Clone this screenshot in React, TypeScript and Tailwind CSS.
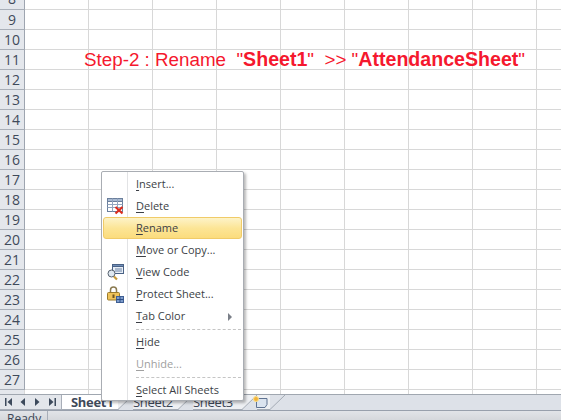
const ROWS = [9, 10, 11, 12, 13, 14, 15, 16, 17, 18, 19, 20, 21, 22, 23, 24, 25, 26, 27];
const COLS = [0, 1, 2, 3, 4, 5, 6, 7, 8];

function Cells() {
  return (
    <div className="flex flex-1 h-full">
      {COLS.map((c) => (
        <div key={c} className="w-[64px] h-full shrink-0 border-r border-[#d8d8d8] box-border" />
      ))}
    </div>
  );
}

function Row({ n }: { n: number }) {
  return (
    <div className="flex h-[20px] shrink-0 border-b border-[#d8d8d8] box-border">
      <div className="w-[25px] shrink-0 bg-[#e4e7ec] border-r border-r-[#9ea5b0] border-b border-b-[#a9afb8] -mb-px flex items-center justify-center text-[14px] text-[#3f4a5a]">
        {n}
      </div>
      <Cells />
    </div>
  );
}

function DeleteIcon() {
  return (
    <svg width="17" height="17" viewBox="0 0 17 17">
      <rect x="0.500" y="0.500" width="15" height="13" fill="#fff" stroke="#6b7f9c" />
      <rect x="0.500" y="0.500" width="15" height="3" fill="#a9bad2" stroke="#6b7f9c" />
      <path d="M0.500 6.500h15M0.500 9.500h15M5.500 0.500v13M10.500 0.500v13" stroke="#93a6c0" />
      <path d="M8.500 9l7 6.500M15.500 9l-7 6.500" stroke="#dc2d1e" strokeWidth="2.200" />
    </svg>
  );
}

function ViewCodeIcon() {
  return (
    <svg width="17" height="17" viewBox="0 0 17 17">
      <rect x="5.500" y="0.500" width="11" height="9" fill="#e8eef6" stroke="#4a6285" />
      <rect x="5.500" y="0.500" width="11" height="2" fill="#6f8db8" stroke="#4a6285" />
      <path d="M8 5h7M8 7h7" stroke="#6d84a6" />
      <circle cx="4.500" cy="9.500" r="3.500" fill="#dfe8f0" stroke="#56616e" />
      <path d="M7 12.500l3 3" stroke="#c79a3a" strokeWidth="2.200" />
    </svg>
  );
}

function ProtectIcon() {
  return (
    <svg width="17" height="17" viewBox="0 0 17 17">
      <path d="M3.500 6.500V4a3 3 0 0 1 6 0v2.500" fill="none" stroke="#8a7a50" strokeWidth="1.500" />
      <rect x="0.500" y="6.500" width="12" height="7.500" rx="1" fill="#efc35a" stroke="#9a7a2c" />
      <rect x="5.500" y="8.500" width="2" height="3.500" fill="#6f5520" />
      <rect x="9.500" y="10.500" width="7" height="6" fill="#7d9ccb" stroke="#3f5f94" />
      <path d="M9.500 13.500h7M13 10.500v6" stroke="#2f4f86" />
    </svg>
  );
}

function NewSheetIcon() {
  return (
    <svg width="15" height="12" viewBox="0 0 15 12" className="relative z-20">
      <path d="M3.500 2.500h10.500v6l-2 3h-8.500z" fill="#dbe4ef" stroke="#5f7391" />
      <circle cx="3" cy="3" r="2.500" fill="#f2b33a" stroke="#fbe08a" />
    </svg>
  );
}

function NavIcons() {
  return (
    <svg width="52" height="10" viewBox="0 0 52 10" className="ml-[5px]">
      <g fill="#3d4a5c">
        <rect x="0" y="1" width="1.500" height="8" />
        <path d="M7 1v8L2.500 5z" />
        <path d="M20 1v8l-4.500-4z" />
        <path d="M30 1v8l4.500-4z" />
        <path d="M44 1v8l4.500-4z" />
        <rect x="49.500" y="1" width="1.500" height="8" />
      </g>
    </svg>
  );
}

// 45 degree edge between two sheet tabs, its foot on the tab's bottom line
function TabSlant() {
  return (
    <svg width="15" height="15" viewBox="0 0 15 15" className="absolute top-0 -right-[15px] z-10">
      <path d="M0 15L15 0V15z" fill="#dde1e8" />
      <path d="M0 14.500L15 0" stroke="#a3aab4" fill="none" />
    </svg>
  );
}

function Item({
  u,
  post,
  icon,
  hot,
  off,
  arrow,
}: {
  u: string;
  post: string;
  icon?: React.ReactNode;
  hot?: boolean;
  off?: boolean;
  arrow?: boolean;
}) {
  return (
    <div
      className={`relative flex items-center h-[22px] pt-px rounded-[3px] border ${
        hot ? "border-[#f0cb68] bg-gradient-to-b from-[#fdf3c8] via-[#fce596] to-[#fbdc7d]" : "border-transparent"
      } ${off ? "text-[#a0a0a0]" : "text-[#3c3f46]"}`}
    >
      <div className="w-[24px] shrink-0 flex items-center pl-[3px]">{icon}</div>
      <div className="ml-[8px] whitespace-nowrap">
        <span className="underline underline-offset-2">{u}</span>
        {post}
      </div>
      {arrow && <div className="absolute right-[9px] top-[7px] w-0 h-0 border-y-[4px] border-y-transparent border-l-[4px] border-l-[#7a7f88]" />}
    </div>
  );
}

function Separator() {
  return <div className="h-[4px] flex items-center ml-[33px] mr-[1px]"><div className="w-full border-t border-dashed border-[#c5c5c5]" /></div>;
}

export default function App() {
  return (
    <div className="relative w-[561px] h-[420px] overflow-hidden bg-white flex flex-col font-['Liberation_Sans',sans-serif]">
      <div className="flex-1 overflow-hidden flex flex-col font-['Open_Sans',sans-serif]">
        <div className="flex h-[10px] shrink-0 border-b border-[#d8d8d8] box-border">
          <div className="w-[25px] shrink-0 bg-[#e4e7ec] border-r border-r-[#9ea5b0] border-b border-b-[#a9afb8] -mb-px flex items-end justify-center text-[14px] leading-[20px] text-[#3f4a5a] overflow-hidden">
            8
          </div>
          <Cells />
        </div>
        {ROWS.map((n) => (
          <Row key={n} n={n} />
        ))}
        <div className="flex flex-1">
          <div className="w-[25px] shrink-0 border-r border-[#d8d8d8] bg-[#e4e7ec]" />
          <Cells />
        </div>
      </div>

      <div className="h-[16px] shrink-0 flex bg-[#dde1e8] border-t border-[#a0a7b0] box-border">
        <div className="w-[62px] shrink-0 flex items-center border-r border-b border-[#a8aeb8] bg-[#e3e6eb]">
          <NavIcons />
        </div>
        <div className="flex items-stretch text-[#3c4656] text-[13px] leading-[15px] tracking-[-0.3px] font-['Open_Sans',sans-serif]">
          <div className="relative w-[56px] bg-white border-b border-[#a3aab4] pl-[9px] font-bold text-[#3f4a5a] whitespace-nowrap">
            Sheet1
            <TabSlant />
          </div>
          <div className="relative w-[60px] bg-[#eef0f3] border-b border-[#a3aab4] pl-[15px] whitespace-nowrap">
            Sheet2
            <TabSlant />
          </div>
          <div className="relative w-[64px] bg-[#eef0f3] border-b border-[#a3aab4] pl-[15px] whitespace-nowrap">
            Sheet3
            <TabSlant />
          </div>
          <div className="relative w-[28px] bg-[#eef0f3] border-b border-[#a3aab4] flex items-center pl-[11px]">
            <NewSheetIcon />
            <TabSlant />
          </div>
        </div>
      </div>

      <div className="h-[10px] shrink-0 bg-gradient-to-b from-[#e2e4e8] to-[#d5d8dc] border-t border-[#98a0ac] box-border flex">
        <div className="w-[48px] pl-[7px] text-[12px] leading-[15px] text-[#3c4656] font-['Open_Sans',sans-serif] border-r border-[#a8aeb8]">Ready</div>
      </div>

      <div className="absolute left-[84px] top-[48px] text-[18.800px] leading-[22px] text-[#f5182e] whitespace-pre">
        {'Step-2 : Rename  "'}
        <b className="text-[19.600px]">Sheet1</b>
        {'"  >> "'}
        <b className="text-[19.600px]">AttendanceSheet</b>
        {'"'}
      </div>

      <div className="absolute z-20 left-[101px] top-[171px] w-[143px] h-[230px] bg-white border border-[#a9adb3] rounded-[2px] shadow-[2px_2px_3px_rgba(0,0,0,0.28)] p-[1px] text-[11px] font-['Open_Sans',sans-serif]">
        <div className="absolute left-[25px] top-0 bottom-0 border-l border-[#e2e3e5]" />
        <Item u="I" post="nsert..." />
        <Item u="D" post="elete" icon={<DeleteIcon />} />
        <Item u="R" post="ename" hot />
        <Item u="M" post="ove or Copy..." />
        <Item u="V" post="iew Code" icon={<ViewCodeIcon />} />
        <Item u="P" post="rotect Sheet..." icon={<ProtectIcon />} />
        <Item u="T" post="ab Color" arrow />
        <Separator />
        <Item u="H" post="ide" />
        <Item u="U" post="nhide..." off />
        <Separator />
        <Item u="S" post="elect All Sheets" />
      </div>
    </div>
  );
}
